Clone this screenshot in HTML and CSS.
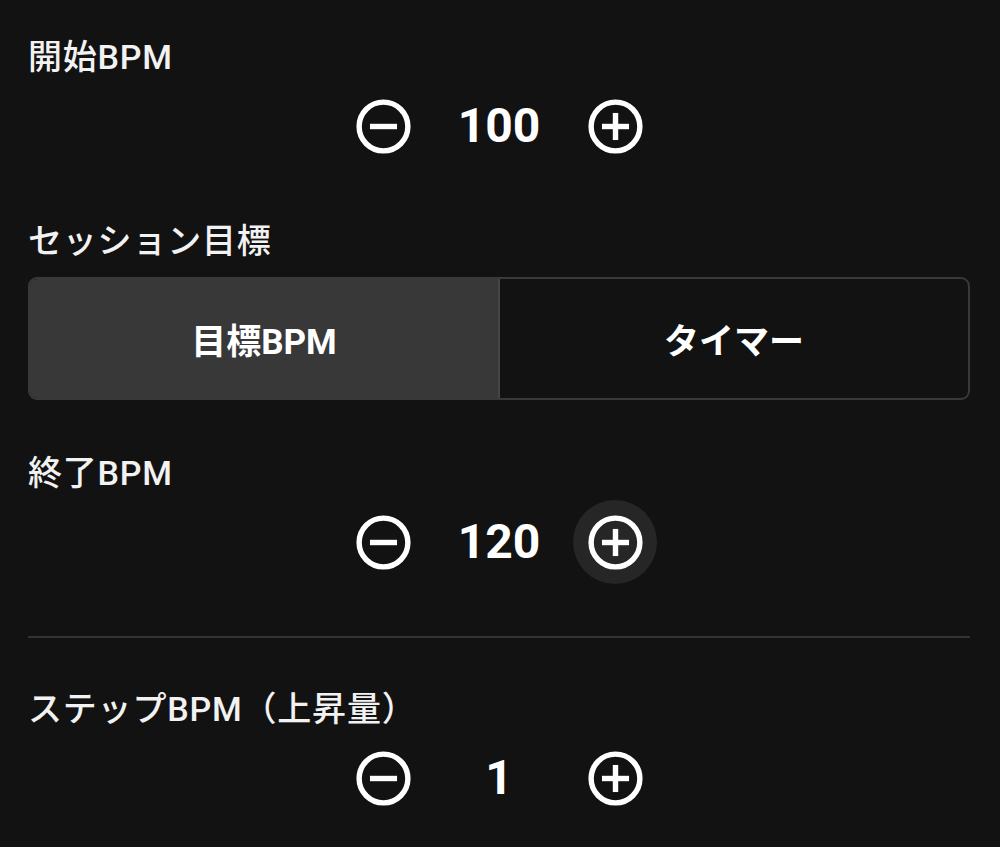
FILE: index.html
```html
<!DOCTYPE html>
<html lang="ja">
<head>
<meta charset="utf-8">
<link rel="stylesheet" href="styles.css">
</head>
<body>
<div class="panel">
  <section class="field">
    <div class="label">開始BPM</div>
    <div class="stepper">
      <button class="icon-btn" aria-label="減らす">
        <svg viewBox="0 0 24 24"><circle cx="12" cy="12" r="9" fill="none" stroke="currentColor" stroke-width="2"/><rect x="7" y="11" width="10" height="2" fill="currentColor"/></svg>
      </button>
      <div class="value">100</div>
      <button class="icon-btn" aria-label="増やす">
        <svg viewBox="0 0 24 24"><circle cx="12" cy="12" r="9" fill="none" stroke="currentColor" stroke-width="2"/><rect x="7" y="11" width="10" height="2" fill="currentColor"/><rect x="11" y="7" width="2" height="10" fill="currentColor"/></svg>
      </button>
    </div>
  </section>

  <section class="field goal">
    <div class="label">セッション目標</div>
    <div class="toggle">
      <button class="toggle-btn selected">目標BPM</button>
      <button class="toggle-btn">タイマー</button>
    </div>
  </section>

  <section class="field">
    <div class="label">終了BPM</div>
    <div class="stepper">
      <button class="icon-btn" aria-label="減らす">
        <svg viewBox="0 0 24 24"><circle cx="12" cy="12" r="9" fill="none" stroke="currentColor" stroke-width="2"/><rect x="7" y="11" width="10" height="2" fill="currentColor"/></svg>
      </button>
      <div class="value">120</div>
      <button class="icon-btn hover" aria-label="増やす">
        <svg viewBox="0 0 24 24"><circle cx="12" cy="12" r="9" fill="none" stroke="currentColor" stroke-width="2"/><rect x="7" y="11" width="10" height="2" fill="currentColor"/><rect x="11" y="7" width="2" height="10" fill="currentColor"/></svg>
      </button>
    </div>
  </section>

  <hr class="divider">

  <section class="field">
    <div class="label">ステップBPM（上昇量）</div>
    <div class="stepper">
      <button class="icon-btn" aria-label="減らす">
        <svg viewBox="0 0 24 24"><circle cx="12" cy="12" r="9" fill="none" stroke="currentColor" stroke-width="2"/><rect x="7" y="11" width="10" height="2" fill="currentColor"/></svg>
      </button>
      <div class="value">1</div>
      <button class="icon-btn" aria-label="増やす">
        <svg viewBox="0 0 24 24"><circle cx="12" cy="12" r="9" fill="none" stroke="currentColor" stroke-width="2"/><rect x="7" y="11" width="10" height="2" fill="currentColor"/><rect x="11" y="7" width="2" height="10" fill="currentColor"/></svg>
      </button>
    </div>
  </section>
</div>
</body>
</html>
```

FILE: styles.css
```css
html, body {
  margin: 0;
  padding: 0;
  background: #121212;
}

body {
  color: #ffffff;
  font-family: Roboto, "Noto Sans CJK JP", sans-serif;
}

.panel {
  padding: 37px 30px 0 28px;
  display: flex;
  flex-direction: column;
  gap: 53px;
}

.field {
  display: flex;
  flex-direction: column;
  gap: 7px;
}

.field.goal {
  gap: 16px;
}

.label {
  font-size: 34px;
  line-height: 40px;
  font-weight: 500;
  letter-spacing: 0.8px;
  color: #f2f2f2;
}

.stepper {
  display: flex;
  justify-content: center;
  align-items: center;
  height: 84px;
}

.icon-btn {
  width: 84px;
  height: 84px;
  border: none;
  border-radius: 50%;
  background: transparent;
  color: #ffffff;
  padding: 0;
  display: flex;
  align-items: center;
  justify-content: center;
  cursor: pointer;
}

.icon-btn.hover {
  background: #262626;
}

.icon-btn svg {
  width: 65px;
  height: 65px;
  display: block;
}

.value {
  width: 148px;
  text-align: center;
  font-size: 48px;
  font-weight: 700;
  line-height: 84px;
}

.toggle {
  display: flex;
  height: 123px;
  border-radius: 9px;
  overflow: hidden;
  border: 2px solid #393939;
  box-sizing: border-box;
}

.toggle-btn {
  flex: 1;
  border: none;
  background: transparent;
  color: #ffffff;
  font-family: Roboto, "Noto Sans CJK JP", sans-serif;
  font-size: 35px;
  font-weight: 700;
  padding: 0;
}

.toggle-btn.selected {
  background: #383838;
  border-right: 2px solid #454545;
}

.divider {
  margin: -1px 0 -2px;
  border: none;
  height: 2px;
  background: #333333;
}
```
